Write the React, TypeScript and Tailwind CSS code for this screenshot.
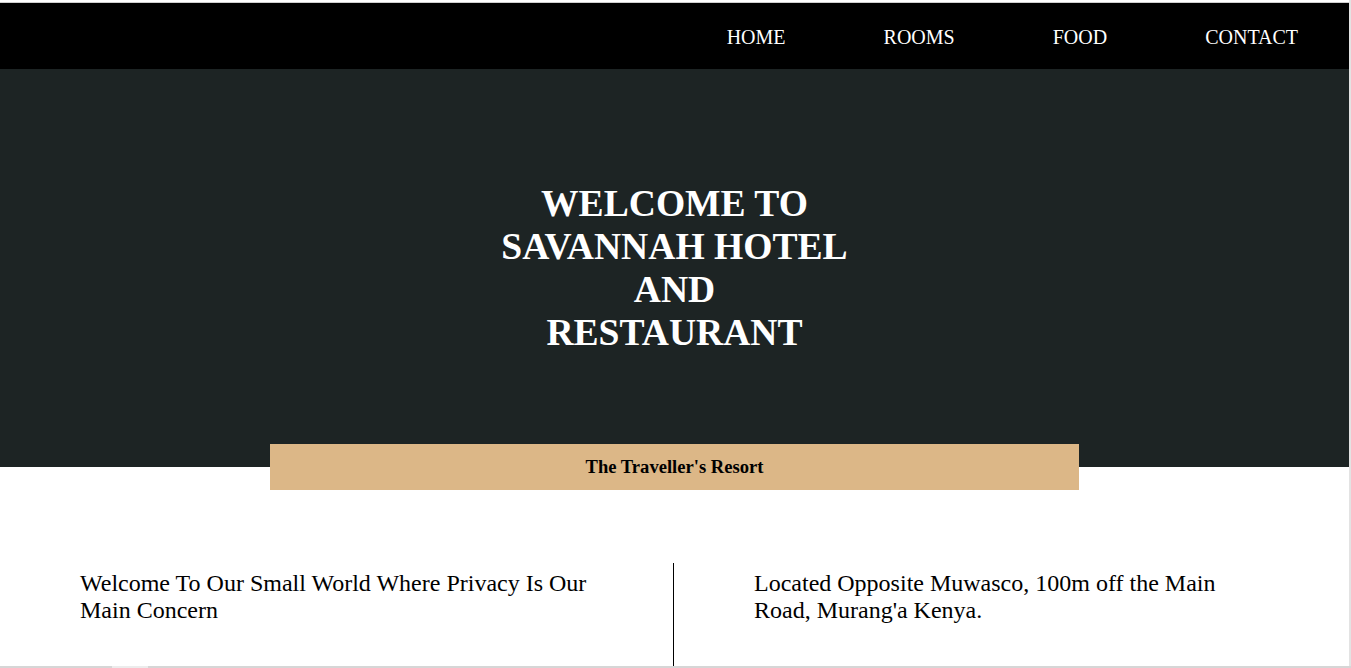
import React from "react";

export default function App() {
  const serif = { fontFamily: '"Liberation Serif", "Times New Roman", serif' };
  return (
    <div
      className="h-[668px] w-[1351px] overflow-hidden bg-white"
      style={serif}
    >
      <div className="flex h-[666px] flex-col border-r-2 border-[#e3e3e3]">
        <div className="h-[2px] bg-white" />
        <div className="h-px bg-[#cfcfcf]" />
        <nav className="flex h-[66px] items-center justify-end gap-[98px] bg-black pr-[51px] pt-[2px] text-[20px] text-white">
          <span>HOME</span>
          <span>ROOMS</span>
          <span>FOOD</span>
          <span>CONTACT</span>
        </nav>
        <section className="flex h-[398px] items-center justify-center bg-[#1d2424]">
          <h1 className="text-center text-[37.6px] font-bold leading-[43px] text-white">
            WELCOME TO
            <br />
            SAVANNAH HOTEL
            <br />
            AND
            <br />
            RESTAURANT
          </h1>
        </section>
        <div className="mx-auto -mt-[23px] flex h-[46px] w-[809px] items-center justify-center bg-[#dcb787] text-[18.6px] font-bold text-black">
          The Traveller's Resort
        </div>
        <div className="mt-[73px] flex flex-1">
          <div className="w-[674px] border-r border-black px-[80px] pt-[7px] text-[24px] leading-[27px] text-black">
            Welcome To Our Small World Where Privacy Is Our Main Concern
          </div>
          <div className="flex-1 px-[80px] pt-[7px] text-[24px] leading-[27px] text-black">
            Located Opposite Muwasco, 100m off the Main Road, Murang'a Kenya.
          </div>
        </div>
      </div>
      <div className="flex h-[2px] bg-[#d6d6d6]">
        <div className="ml-[112px] w-[36px] bg-[#ececec]" />
      </div>
    </div>
  );
}
